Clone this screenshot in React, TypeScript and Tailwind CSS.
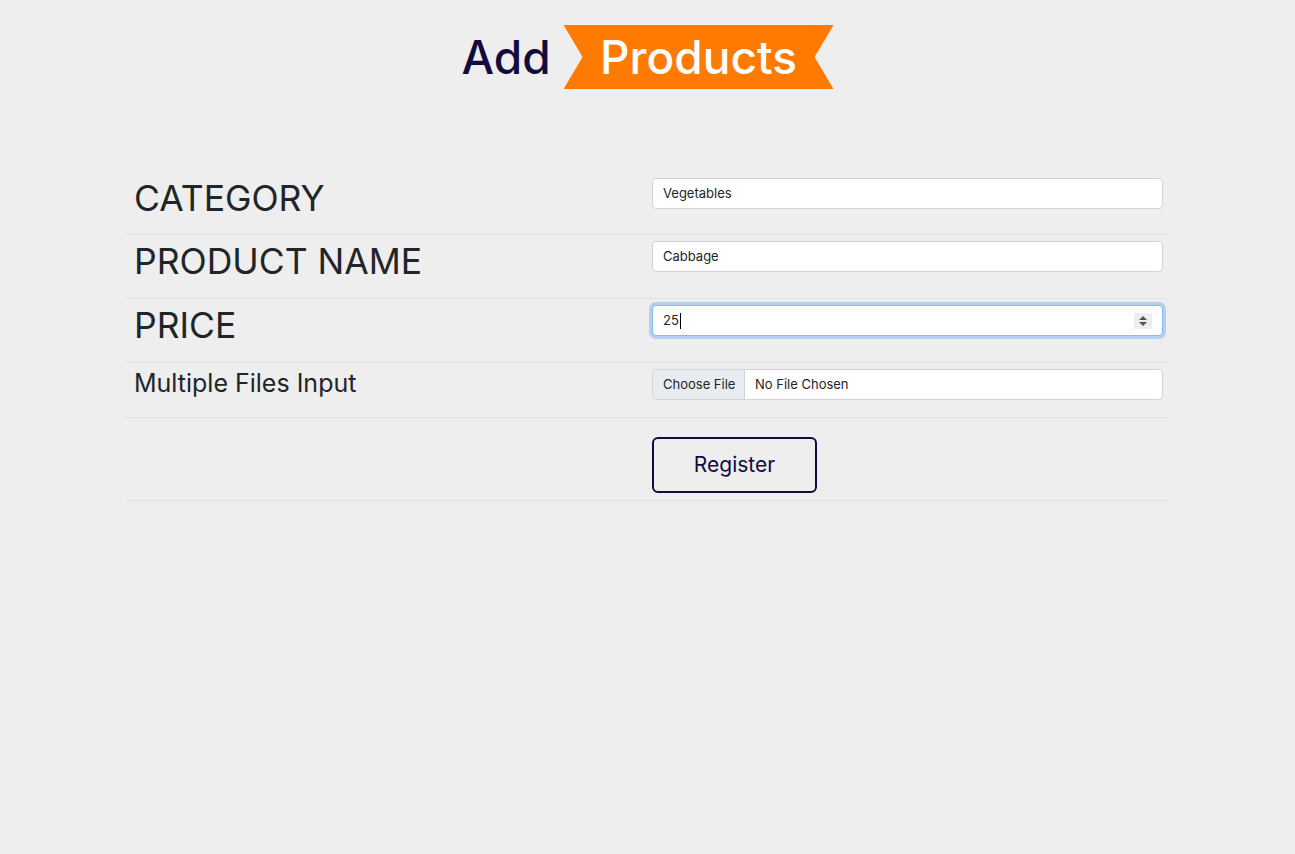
import React from "react";

const font = { fontFamily: "Inter, 'Open Sans', sans-serif" };

function Row({ h, label, children }: { h: string; label: React.ReactNode; children: React.ReactNode }) {
  return (
    <div className={`grid grid-cols-[518px_1fr] border-b border-[#dee2e6] ${h}`}>
      <div className="px-2">{label}</div>
      <div className="pl-2 pr-[5px] pt-[6px]">{children}</div>
    </div>
  );
}

function TextBox({ value }: { value: string }) {
  return (
    <div className="h-[31px] w-full rounded-[4px] border border-[#ced4da] bg-white px-[10px] flex items-center text-[13px] text-[#212529]">
      {value}
    </div>
  );
}

export default function App() {
  return (
    <div className="min-h-screen bg-[#eeeeee] text-[#212529]" style={font}>
      <div className="flex justify-center items-center pt-[25px] gap-[13px]">
        <span className="text-[46px] leading-none font-medium text-[#120c3e]">Add</span>
        <div
          className="h-[64px] w-[270px] bg-[#ff7a00] flex items-center justify-center text-white text-[46px] font-medium leading-none"
          style={{ clipPath: "polygon(0 0, 100% 0, calc(100% - 19px) 50%, 100% 100%, 0 100%, 19px 50%)" }}
        >
          Products
        </div>
      </div>

      <div className="ml-[126px] mt-[83px] w-[1042px]">
        <Row h="h-[63px]" label={<div className="pt-[6px] text-[35.5px] leading-[1.2]">CATEGORY</div>}>
          <TextBox value="Vegetables" />
        </Row>
        <Row h="h-[64px]" label={<div className="pt-[6px] text-[35.5px] leading-[1.2]">PRODUCT NAME</div>}>
          <TextBox value="Cabbage" />
        </Row>
        <Row h="h-[64px]" label={<div className="pt-[6px] text-[35.5px] leading-[1.2]">PRICE</div>}>
          <div className="h-[31px] w-full rounded-[4px] border border-[#86b7fe] bg-white pl-[10px] pr-[10px] flex items-center text-[13px] text-[#212529] shadow-[0_0_0_3px_rgba(13,110,253,0.25)]">
            <span>25</span>
            <span className="ml-px inline-block h-[16px] w-px bg-black" />
            <div className="ml-auto h-[16px] w-[18px] bg-[#eeeeee] flex items-center justify-center">
              <svg width="10" height="12" viewBox="0 0 10 12">
                <path d="M5 1 L9 5 L1 5 Z" fill="#555" />
                <path d="M1 7 L9 7 L5 11 Z" fill="#555" />
              </svg>
            </div>
          </div>
        </Row>
        <Row h="h-[55px]" label={<div className="pt-[5px] text-[25px] leading-[1.2]">Multiple Files Input</div>}>
          <div className="h-[31px] w-full rounded-[4px] border border-[#ced4da] bg-white flex items-center text-[13px] text-[#212529] overflow-hidden">
            <div className="h-full w-[92px] bg-[#e9ecef] border-r border-[#ced4da] flex items-center pl-[10px]">Choose File</div>
            <div className="pl-[10px]">No File Chosen</div>
          </div>
        </Row>
        <div className="grid grid-cols-[518px_1fr] border-b border-[#dee2e6] h-[83px]">
          <div />
          <div className="px-2 pt-[19px]">
            <button className="h-[56px] w-[165px] rounded-[6px] border-2 border-[#120c3e] text-[#120c3e] text-[21px] bg-transparent">
              Register
            </button>
          </div>
        </div>
      </div>
    </div>
  );
}
